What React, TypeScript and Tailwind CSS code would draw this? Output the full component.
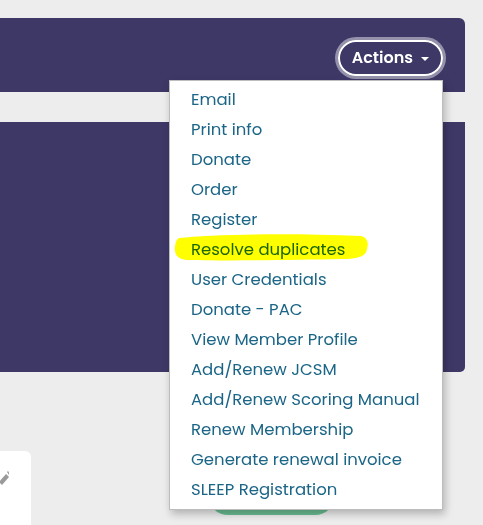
import { useState } from 'react'

const ACTIONS = [
  'Email',
  'Print info',
  'Donate',
  'Order',
  'Register',
  'Resolve duplicates',
  'User Credentials',
  'Donate - PAC',
  'View Member Profile',
  'Add/Renew JCSM',
  'Add/Renew Scoring Manual',
  'Renew Membership',
  'Generate renewal invoice',
  'SLEEP Registration',
]

function Highlight() {
  return (
    <svg className="absolute left-[-18px] top-[-5px] w-[196px] h-[28px] mix-blend-multiply pointer-events-none" viewBox="0 0 196 28">
      <path
        d="M6 5 C40 1 120 0 188 3 C194 4 196 10 194 16 C193 23 186 26 170 26 C120 27 60 28 14 27 C4 26 1 21 2 13 C3 8 4 6 6 5 Z"
        fill="#ffff00"
      />
    </svg>
  )
}

export default function App() {
  const [open] = useState(true)

  return (
    <div className="w-[483px] h-[525px] overflow-hidden bg-[#ededed] font-['Poppins','DejaVu_Sans',sans-serif]">
      {/* header bar */}
      <div className="mt-[18px] mr-[18px] h-[74px] bg-[#3e3867] rounded-tr-[6px] flex items-center justify-end pr-[22px] pt-[6px]">
        <div className="relative z-20">
          <button className="h-[36px] px-[12px] flex items-center gap-[8px] rounded-full border-2 border-white ring-[3px] ring-white/45 text-white text-[16px] font-semibold">
            Actions
            <span className="w-0 h-0 border-l-[4px] border-r-[4px] border-t-[4px] border-l-transparent border-r-transparent border-t-white mt-[2px]" />
          </button>
          {open && (
            <div className="absolute right-0 top-[40px] w-[274px] bg-white border border-[#bdbdbd] py-[4px] shadow-[2px_4px_8px_rgba(0,0,0,0.25)]">
              {ACTIONS.map(a => (
                <div key={a} className="h-[30px] pl-[21px] flex items-center text-[16.5px] text-[#1b6587] whitespace-nowrap">
                  <span className="relative">
                    {a === 'Resolve duplicates' && <Highlight />}
                    {a}
                  </span>
                </div>
              ))}
            </div>
          )}
        </div>
      </div>

      {/* main panel */}
      <div className="mt-[30px] mr-[18px] h-[250px] bg-[#3e3867] rounded-br-[5px]" />

      {/* lower content */}
      <div className="mt-[79px] flex items-start">
        <div className="w-[31px] h-[80px] bg-white rounded-tr-[6px] pt-[19px]">
          <svg width="10" height="16" viewBox="0 0 10 16" className="ml-[-1px]">
            <path d="M0 12 L7 4 L10 7 L3 15 Z" fill="#9a9a9a" />
            <path d="M8 2 L9 1 L11 4 L10 5 Z" fill="#9a9a9a" />
          </svg>
        </div>
        <div className="ml-[177px] mt-[20px] w-[127px] h-[44px] bg-[#6bbd93] rounded-[20px]" />
      </div>
    </div>
  )
}
